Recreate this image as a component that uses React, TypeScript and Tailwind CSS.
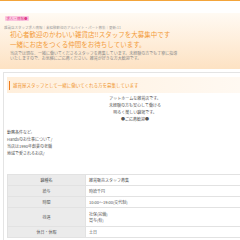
import { FC } from 'react'

// ** Data
const rows = [
  { label: '職種名', value: ['雑貨販売スタッフ募集'] },
  { label: '給与', value: ['時給千円'] },
  { label: '時間', value: ['10:00〜19:00(交代制)'] },
  { label: '待遇', value: ['社保(完備)', '賞与(有)'] },
  { label: '休日・休暇', value: ['土日'] },
]

interface IRow {
  label: string
  value: string[]
}

const Row: FC<IRow> = ({ label, value }) => {
  const tall = value.length > 1
  return (
    <tr className={tall ? 'h-[19px]' : 'h-[11px]'}>
      <td className='w-[78px] bg-[#ebebeb] border border-[#e2e2e2] text-center align-middle'>{label}</td>
      <td className='border border-[#e2e2e2] pl-[3px] align-middle'>
        {value.map((v) => (
          <p key={v} className='leading-[6px]'>{v}</p>
        ))}
      </td>
    </tr>
  )
}

const App = () => {
  return (
    <div className="h-[240px] w-[240px] overflow-hidden bg-white font-['Noto_Sans_CJK_JP','Liberation_Sans',sans-serif]">
      <div className='w-[270px]'>
        {/* top bar */}
        <div className='h-[13px] border-t-[1.5px] border-[#f3a43a] px-[5px]'>
          <span className='inline-block rounded-[1px] bg-[#fbc6df] px-[1.5px] text-[3.5px] leading-[5px] text-[#e0408c]'>求人・情報●</span>
          <p className='-ml-[1px] mt-[1px] text-[3.5px] leading-[4px] text-[#a0a0a0]'>
            雑貨店スタッフ求人情報｜未経験歓迎のアルバイト・パート募集｜更新:11
          </p>
        </div>

        {/* header */}
        <header className='h-[56px] bg-linear-to-b from-[#fffaf3] to-[#fde2c3] px-[10px] pt-[16px]'>
          <h1 className='text-[6.5px] font-normal leading-[10px] text-[#f39c3a]'>
            初心者歓迎のかわいい雑貨店!!スタッフを大募集中です
            <br />
            一緒にお店をつくる仲間をお待ちしています。
          </h1>
          <p className='mt-[1.5px] w-[168px] text-[4px] leading-[5px] text-[#8a8a8a]'>
            当店では現在、一緒に働いてくださるスタッフを募集しています。未経験の方でも丁寧に指導いたしますので、お気軽にご応募ください。雑貨が好きな方大歓迎です。
          </p>
        </header>

        {/* content */}
        <section className='mx-[2.5px] mt-[3px] border border-[#e4e4e4] pt-[4px] pb-[2px]'>
          <div className='mx-[3.5px] flex h-[16px] items-center bg-linear-to-r from-[#ffefdc] to-[#fffaf4] pl-[1.5px]'>
            <span className='h-[9px] w-[1.5px] bg-[#f07c1c]' />
            <h2 className='ml-[3px] text-[4.5px] text-[#f0952e]'>雑貨屋スタッフとして一緒に働いてくれる方を募集しています</h2>
          </div>

          <div className='mt-[1.5px] text-center text-[4px] leading-[7px] text-[#555]'>
            <p>アットホームな雑貨店です。</p>
            <p>未経験の方も安心して働ける</p>
            <p>明るく楽しい職場です。</p>
            <p>●ご応募歓迎●</p>
          </div>

          <div className='mt-[6px] px-[3.5px] text-[4px] leading-[7px] text-[#555]'>
            <p>勤務条件など:</p>
            <p>Handsのお仕事について/</p>
            <p>当店は1990年創業の老舗</p>
            <p>地域で愛されるお店/</p>
          </div>

          <div className='mt-[17px] px-[3.5px]'>
            <table className='w-full border-collapse text-[4px] text-[#555]'>
              <tbody>
                {rows.map((r) => (
                  <Row key={r.label} label={r.label} value={r.value} />
                ))}
              </tbody>
            </table>
          </div>
        </section>
      </div>
    </div>
  )
}

export default App
